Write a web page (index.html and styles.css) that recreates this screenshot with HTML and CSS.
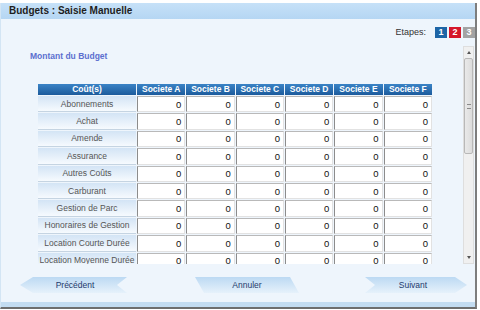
FILE: index.html
```html
<!DOCTYPE html>
<html lang="fr">
<head>
<meta charset="utf-8">
<title>Budgets : Saisie Manuelle</title>
<link rel="stylesheet" href="styles.css">
</head>
<body>
<div class="window">
  <div class="titlebar">Budgets : Saisie Manuelle</div>
  <div class="steps-row">
    <span class="steps-label">Etapes:</span>
    <span class="step step-1">1</span>
    <span class="step step-2">2</span>
    <span class="step step-3">3</span>
  </div>
  <div class="scroll">
    <div class="scroll-content">
      <div class="section-title">Montant du Budget</div>
      <table class="grid">
        <colgroup>
          <col class="c-label">
          <col class="c-val"><col class="c-val"><col class="c-val">
          <col class="c-val"><col class="c-val"><col class="c-val">
        </colgroup>
        <thead>
          <tr>
            <th>Coût(s)</th>
            <th>Societe A</th><th>Societe B</th><th>Societe C</th>
            <th>Societe D</th><th>Societe E</th><th>Societe F</th>
          </tr>
        </thead>
        <tbody>
          <tr><td class="label">Abonnements</td><td class="val">0</td><td class="val">0</td><td class="val">0</td><td class="val">0</td><td class="val">0</td><td class="val">0</td></tr>
          <tr><td class="label">Achat</td><td class="val">0</td><td class="val">0</td><td class="val">0</td><td class="val">0</td><td class="val">0</td><td class="val">0</td></tr>
          <tr><td class="label">Amende</td><td class="val">0</td><td class="val">0</td><td class="val">0</td><td class="val">0</td><td class="val">0</td><td class="val">0</td></tr>
          <tr><td class="label">Assurance</td><td class="val">0</td><td class="val">0</td><td class="val">0</td><td class="val">0</td><td class="val">0</td><td class="val">0</td></tr>
          <tr><td class="label">Autres Coûts</td><td class="val">0</td><td class="val">0</td><td class="val">0</td><td class="val">0</td><td class="val">0</td><td class="val">0</td></tr>
          <tr><td class="label">Carburant</td><td class="val">0</td><td class="val">0</td><td class="val">0</td><td class="val">0</td><td class="val">0</td><td class="val">0</td></tr>
          <tr><td class="label">Gestion de Parc</td><td class="val">0</td><td class="val">0</td><td class="val">0</td><td class="val">0</td><td class="val">0</td><td class="val">0</td></tr>
          <tr><td class="label">Honoraires de Gestion</td><td class="val">0</td><td class="val">0</td><td class="val">0</td><td class="val">0</td><td class="val">0</td><td class="val">0</td></tr>
          <tr><td class="label">Location Courte Durée</td><td class="val">0</td><td class="val">0</td><td class="val">0</td><td class="val">0</td><td class="val">0</td><td class="val">0</td></tr>
          <tr><td class="label">Location Moyenne Durée</td><td class="val">0</td><td class="val">0</td><td class="val">0</td><td class="val">0</td><td class="val">0</td><td class="val">0</td></tr>
        </tbody>
      </table>
    </div>
    <div class="scrollbar">
      <div class="sb-btn sb-up"><span class="arrow-up"></span></div>
      <div class="sb-thumb"><span class="grip"></span></div>
      <div class="sb-track"></div>
      <div class="sb-btn sb-down"><span class="arrow-down"></span></div>
    </div>
  </div>
  <div class="buttons">
    <div class="btn btn-prev">Précédent</div>
    <div class="btn btn-cancel">Annuler</div>
    <div class="btn btn-next">Suivant</div>
  </div>
  <div class="bottom-band"></div>
</div>
</body>
</html>
```

FILE: styles.css
```css
html, body {
  margin: 0;
  padding: 0;
  background: #ffffff;
}

body {
  font-family: "Liberation Sans", Arial, sans-serif;
  width: 480px;
  height: 310px;
  overflow: hidden;
}

.window {
  margin-top: 3px;
  width: 477px;
  height: 306px;
  background: #eef5fc;
  border-left: 1px solid #d3e5f4;
  border-right: 2px solid #7d7d7d;
  border-bottom: 2px solid #6e6e6e;
  display: flex;
  flex-direction: column;
  box-sizing: border-box;
}

.titlebar {
  height: 16px;
  flex: none;
  background: linear-gradient(to bottom, #c6e1f8, #b5d6f3);
  font-size: 10px;
  font-weight: bold;
  color: #1e1e1e;
  line-height: 16px;
  padding-left: 8px;
}

.steps-row {
  height: 27px;
  flex: none;
  display: flex;
  justify-content: flex-end;
  align-items: flex-start;
  padding-top: 8px;
  padding-right: 0;
  box-sizing: border-box;
  gap: 2px;
}

.steps-label {
  font-size: 9px;
  color: #333;
  line-height: 11px;
  margin-right: 7px;
}

.step {
  width: 12px;
  height: 11px;
  font-size: 9px;
  font-weight: bold;
  color: #fff;
  line-height: 11px;
  text-align: center;
}

.step-1 { background: #1d65a6; }
.step-2 { background: #d5172b; }
.step-3 { background: #a3a3a3; }

.scroll {
  height: 218px;
  flex: none;
  display: flex;
  overflow: hidden;
}

.scroll-content {
  flex: 1;
  overflow: hidden;
  padding-left: 29px;
}

.section-title {
  margin-top: 5px;
  font-size: 8.5px;
  line-height: 11px;
  font-weight: bold;
  color: #5b6fcf;
}

.grid {
  margin-top: 21px;
  margin-left: 7px;
  width: 396px;
  border-collapse: separate;
  border-spacing: 1px;
  table-layout: fixed;
  font-size: 9px;
}

.c-label { width: 98px; }
.c-val { width: 48.3px; }

.grid th {
  height: 11px;
  padding: 0;
  background: linear-gradient(to bottom, #3a83c6, #1c5b9c);
  color: #fff;
  font-weight: bold;
  font-size: 8.5px;
  line-height: 11px;
  text-align: center;
  white-space: nowrap;
  overflow: hidden;
}

.grid td {
  height: 16.4px;
  padding: 0;
  box-sizing: border-box;
}

.grid td.label {
  background: linear-gradient(to bottom, #d3e4f5, #f6fafe);
  color: #555;
  font-size: 8.5px;
  text-align: center;
  white-space: nowrap;
  overflow: hidden;
  border-bottom: 1px solid #c5d4e2;
}

.grid td.val {
  background: #fff;
  text-align: right;
  padding-right: 3px;
  color: #111;
  border-left: 1px solid #8c8c8c;
  border-top: 1px solid #b9b9b9;
  border-right: 1px solid #e2e2e2;
  border-bottom: 1px solid #e2e2e2;
  font-size: 9.5px;
}

.scrollbar {
  width: 11px;
  flex: none;
  margin-right: 1px;
  display: flex;
  flex-direction: column;
  background: #f0f0f0;
  border: 1px solid #dedede;
  box-sizing: border-box;
}

.sb-btn {
  height: 11px;
  flex: none;
  display: flex;
  align-items: center;
  justify-content: center;
}

.arrow-up {
  width: 0;
  height: 0;
  border-left: 2.5px solid transparent;
  border-right: 2.5px solid transparent;
  border-bottom: 3px solid #555;
}

.arrow-down {
  width: 0;
  height: 0;
  border-left: 2.5px solid transparent;
  border-right: 2.5px solid transparent;
  border-top: 3px solid #555;
}

.sb-thumb {
  height: 94px;
  flex: none;
  background: linear-gradient(to right, #e9e9e9, #dcdcdc);
  border: 1px solid #b8b8b8;
  border-radius: 2px;
  display: flex;
  align-items: center;
  justify-content: center;
}

.grip {
  width: 4px;
  height: 3px;
  border-top: 1px solid #8a8a8a;
  border-bottom: 1px solid #8a8a8a;
}

.sb-track {
  flex: 1;
}

.buttons {
  height: 38px;
  flex: none;
  display: flex;
  align-items: flex-start;
  padding-top: 13px;
  box-sizing: border-box;
}

.btn {
  height: 16px;
  line-height: 16px;
  font-size: 8.5px;
  color: #243a6c;
  text-align: center;
  box-sizing: border-box;
  background: linear-gradient(to bottom, #bcd9f3, #e6f1fb);
}

.btn-prev {
  width: 107px;
  margin-left: 19px;
  padding-left: 3px;
  clip-path: polygon(0 50%, 13px 0, 100% 0, calc(100% - 10px) 50%, 100% 100%, 13px 100%);
}

.btn-cancel {
  width: 104px;
  margin-left: 68px;
  clip-path: polygon(0 0, calc(100% - 9px) 0, 100% 100%, 9px 100%);
}

.btn-next {
  width: 102px;
  margin-left: 66px;
  padding-right: 6px;
  clip-path: polygon(0 0, calc(100% - 12px) 0, 100% 50%, calc(100% - 12px) 100%, 0 100%, 10px 50%);
}

.bottom-band {
  flex: 1;
  background: #c3dcf1;
}
```
